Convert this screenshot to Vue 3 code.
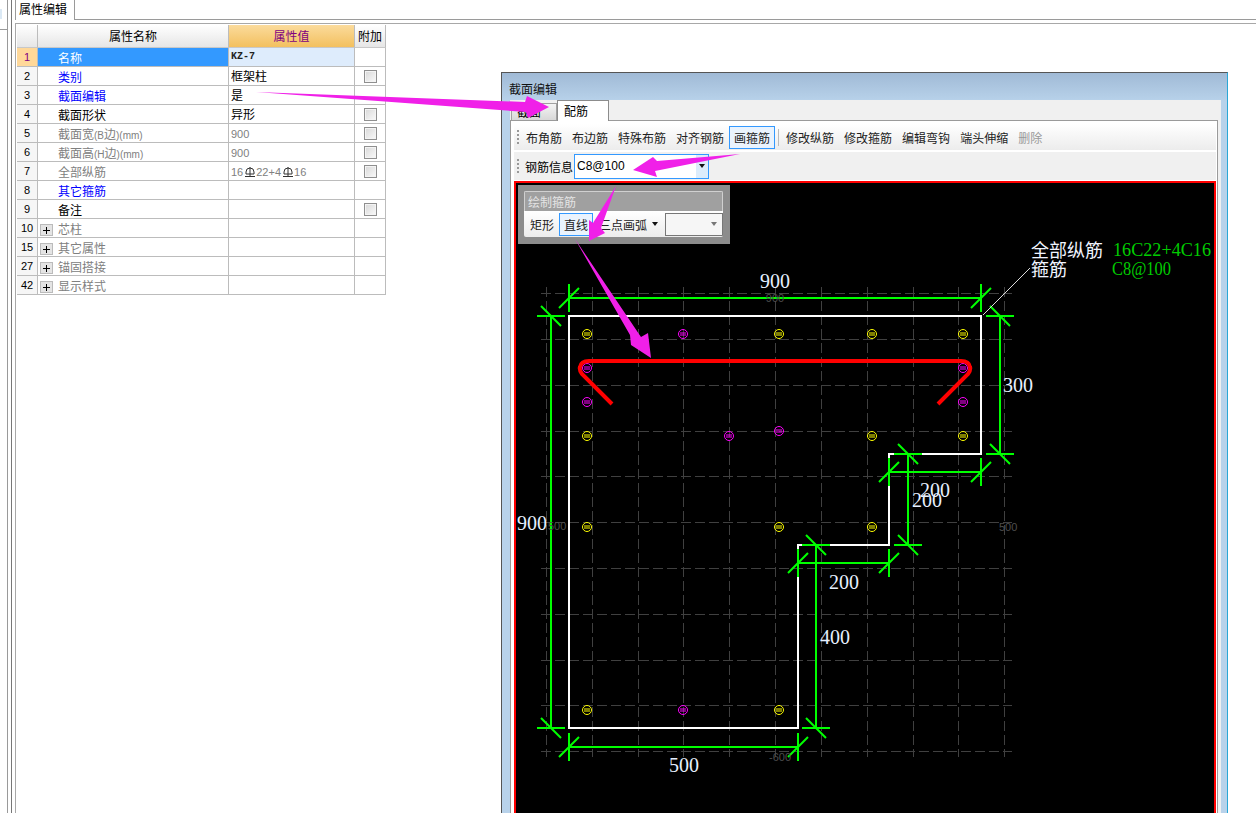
<template>
  <div class="page">
    <div class="rail"></div>

    <div class="main">
      <div class="tab-strip">
        <div class="doc-tab">属性编辑</div>
      </div>
      <div class="prop-panel">
        <table class="prop-table">
          <thead>
            <tr>
              <th class="corner"></th>
              <th class="head-name">属性名称</th>
              <th class="head-value">属性值</th>
              <th class="head-extra">附加</th>
            </tr>
          </thead>
          <tbody>
            <tr v-for="row in rows" :key="row.no" :class="{ selected: row.no === 1 }">
              <td class="row-no">{{ row.no }}</td>
              <td class="name-cell" :class="[row.tone, { tree: row.tree }]">
                <div class="cell-line">
                  <span v-if="row.tree" class="expander"></span>
                  <template v-for="(part, i) in splitLabel(row.name)" :key="i">
                    <span :class="{ latin: part.latin }">{{ part.text }}</span>
                  </template>
                </div>
              </td>
              <td class="value-cell" :class="{ muted: row.tone === 'gray', code: row.no === 1 }">
                <div class="cell-line value-line">
                  <template v-for="(part, i) in row.value.split('Φ')" :key="i">
                    <svg v-if="i > 0" class="grade" viewBox="0 0 10 10" width="10" height="10">
                      <path d="M1 7V5a4 4 0 0 1 8 0v2M1 7h8M5 0v9M0 9.500h10" fill="none" stroke="#333" stroke-width="1" />
                    </svg>
                    <span :class="{ digits: /^[0-9]/.test(part) }">{{ part }}</span>
                  </template>
                </div>
              </td>
              <td class="extra-cell"><span v-if="row.check" class="check"></span></td>
            </tr>
          </tbody>
        </table>
      </div>
    </div>

    <section class="dialog">
      <div class="dialog-title">截面编辑</div>
      <div class="dialog-body">
        <div class="tabs">
          <div class="tab-off">截面</div>
          <div class="tab-on">配筋</div>
        </div>
        <div class="tab-panel">
          <div class="toolbar">
            <span class="grip"></span>
            <template v-for="tool in tools" :key="tool">
              <span class="tool" :class="{ active: tool === '画箍筋', disabled: tool === '删除' }">{{ tool }}</span>
              <span v-if="tool === '画箍筋'" class="tool-sep"></span>
            </template>
          </div>
          <div class="toolbar second">
            <span class="grip"></span>
            <span class="info-label">钢筋信息</span>
            <div class="combo-blue">
              <span>C8@100</span>
              <span class="combo-drop"><i class="caret"></i></span>
            </div>
          </div>

          <div class="canvas">
            <svg class="drawing" viewBox="516 183 697 630" width="697" height="630">
              <path :d="gridPath" class="grid" />
              <polygon class="outline" points="569,316 981,316 981,454 889,454 889,545 798,545 798,728 569,728" />
              <g v-for="bar in bars" :key="bar.x + '-' + bar.y" :stroke="bar.c" fill="none" stroke-width="1">
                <circle :cx="bar.x" :cy="bar.y" r="4.500" />
                <path :d="`M${bar.x - 3} ${bar.y - 1}h6M${bar.x - 3} ${bar.y + 1}h6`" />
              </g>
              <path class="stirrup" d="M612 404L582 374Q579 370 580 367Q581 361 589 361H961Q969 361 970 367Q971 370 968 374L938 404" />
              <path class="dims" :d="dimPath" />
              <line x1="983" y1="315" x2="1030" y2="268" class="leader" />

              <text x="775" y="288" class="dim-text" text-anchor="middle">900</text>
              <text x="1003" y="392" class="dim-text">300</text>
              <text x="517" y="530" class="dim-text">900</text>
              <text x="920" y="497" class="dim-text">200</text>
              <text x="912" y="507" class="dim-text">200</text>
              <text x="829" y="589" class="dim-text">200</text>
              <text x="820" y="644" class="dim-text">400</text>
              <text x="669" y="772" class="dim-text">500</text>

              <text x="775" y="302" class="axis-text" text-anchor="middle">900</text>
              <text x="548" y="530" class="axis-text">500</text>
              <text x="999" y="531" class="axis-text">500</text>
              <text x="769" y="761" class="axis-text">-600</text>

              <text x="1031" y="257" class="note-text">全部纵筋</text>
              <text x="1031" y="276" class="note-text">箍筋</text>
              <text x="1113" y="256" class="rebar-text" textLength="98" lengthAdjust="spacingAndGlyphs">16C22+4C16</text>
              <text x="1112" y="275" class="rebar-text" textLength="59" lengthAdjust="spacingAndGlyphs">C8@100</text>
            </svg>

            <div class="float-panel">
              <div class="float-inner">
                <div class="float-title">绘制箍筋</div>
                <div class="float-bar">
                  <span class="tool">矩形</span>
                  <span class="tool active">直线</span>
                  <span class="arc">三点画弧</span>
                  <i class="caret"></i>
                  <span class="mini-combo"><i class="caret gray"></i></span>
                </div>
              </div>
            </div>
          </div>
        </div>
      </div>
    </section>

    <svg class="arrows" viewBox="0 0 1256 813" width="1256" height="813">
      <polygon points="256,92 525,102 527,96 549,107 528,118 526,112" />
      <polygon points="740,154 657,161 653,157 633,170 657,177 655,171" />
      <polygon points="616,186 601,228 605,233 589,241 589,220 593,223" />
      <polygon points="575,239 641,337 648,333 651,358 631,345 630,335" />
    </svg>
  </div>
</template>

<script setup>
const rows = [
  { no: 1, name: '名称', value: 'KZ-7', tone: 'white' },
  { no: 2, name: '类别', value: '框架柱', tone: 'blue', check: true },
  { no: 3, name: '截面编辑', value: '是', tone: 'blue' },
  { no: 4, name: '截面形状', value: '异形', tone: 'black', check: true },
  { no: 5, name: '截面宽(B边)(mm)', value: '900', tone: 'gray', check: true },
  { no: 6, name: '截面高(H边)(mm)', value: '900', tone: 'gray', check: true },
  { no: 7, name: '全部纵筋', value: '16Φ22+4Φ16', tone: 'gray', check: true },
  { no: 8, name: '其它箍筋', value: '', tone: 'blue' },
  { no: 9, name: '备注', value: '', tone: 'black', check: true },
  { no: 10, name: '芯柱', value: '', tone: 'gray', tree: true },
  { no: 15, name: '其它属性', value: '', tone: 'gray', tree: true },
  { no: 27, name: '锚固搭接', value: '', tone: 'gray', tree: true },
  { no: 42, name: '显示样式', value: '', tone: 'gray', tree: true }
]

const tools = ['布角筋', '布边筋', '特殊布筋', '对齐钢筋', '画箍筋', '修改纵筋', '修改箍筋', '编辑弯钩', '端头伸缩', '删除']

// ascii bits in the labels are narrower than the chinese ones
function splitLabel(name) {
  return name.split(/([()A-Za-z]+)/).filter(Boolean).map(text => ({ text, latin: /^[()A-Za-z]/.test(text) }))
}

const Y = '#ffff00'
const M = '#ff00ff'
const bars = [
  { x: 587, y: 334, c: Y }, { x: 683, y: 334, c: M }, { x: 779, y: 334, c: Y }, { x: 872, y: 334, c: Y }, { x: 963, y: 334, c: Y },
  { x: 587, y: 368, c: M }, { x: 963, y: 368, c: M }, { x: 587, y: 402, c: M }, { x: 963, y: 402, c: M },
  { x: 587, y: 436, c: Y }, { x: 729, y: 436, c: M }, { x: 779, y: 431, c: M }, { x: 872, y: 436, c: Y }, { x: 963, y: 436, c: Y },
  { x: 587, y: 527, c: Y }, { x: 779, y: 527, c: Y }, { x: 872, y: 527, c: Y },
  { x: 587, y: 710, c: Y }, { x: 683, y: 710, c: M }, { x: 779, y: 710, c: Y }
]

const gridX = [546, 592, 638, 683, 729, 775, 821, 867, 913, 958, 1004]
const gridY = [293, 339, 385, 431, 476, 522, 568, 614, 660, 705, 751]
const gridPath = gridX.map(x => `M${x}.5 287V757`).concat(gridY.map(y => `M541 ${y}.5H1012`)).join('')

// dimension line with a vertical or horizontal stop and a slash at each end
function hDim(y, x1, x2) {
  const stop = x => `M${x} ${y - 14}V${y + 14}M${x - 10} ${y + 10}L${x + 10} ${y - 10}`
  return `M${x1} ${y}H${x2}` + stop(x1) + stop(x2)
}
function vDim(x, y1, y2) {
  const stop = y => `M${x - 14} ${y}H${x + 14}M${x - 10} ${y - 10}L${x + 10} ${y + 10}`
  return `M${x} ${y1}V${y2}` + stop(y1) + stop(y2)
}
const dimPath = [
  hDim(298, 569, 981), hDim(472, 889, 981), hDim(563, 798, 889), hDim(747, 569, 798),
  vDim(551, 316, 728), vDim(1000, 316, 454), vDim(908, 454, 545), vDim(816, 545, 728)
].join('')
</script>

<style scoped>
.page {
  position: relative;
  display: flex;
  width: 1256px;
  height: 813px;
  overflow: hidden;
  background: #fff;
  font-family: "Noto Sans CJK SC", "Liberation Sans", sans-serif;
  font-size: 12px;
  color: #000;
}

.rail {
  flex: none;
  width: 15px;
  background:
    linear-gradient(#9a9a9a, #9a9a9a) 7px 0 / 1px 100% no-repeat,
    linear-gradient(#777, #777) 11px 0 / 1px 100% no-repeat,
    linear-gradient(#9a9a9a, #9a9a9a) 0 29px / 7px 1px no-repeat,
    linear-gradient(#dbe9f5, #dbe9f5) 0 9px / 2px 10px no-repeat;
}

.main {
  flex: 1;
  min-width: 0;
}

.tab-strip {
  height: 20px;
  box-sizing: border-box;
  border-bottom: 1px solid #9a9a9a;
}

.doc-tab {
  width: 60px;
  height: 20px;
  box-sizing: border-box;
  border-left: 1px solid #9a9a9a;
  border-right: 1px solid #9a9a9a;
  background: #fff;
  padding-left: 3px;
  line-height: 18px;
}

.prop-panel {
  height: 790px;
  box-sizing: border-box;
  border-left: 1px solid #a8a8a8;
  margin-top: 3px;
  border-top: 1px solid #a8a8a8;
  padding: 1px 0 0 1px;
}

.prop-table {
  table-layout: fixed;
  width: 369px;
  border-collapse: separate;
  border-spacing: 0;
}

.prop-table th,
.prop-table td {
  box-sizing: border-box;
  height: 19px;
  padding: 0;
  border-right: 1px solid #bcbcbc;
  border-bottom: 1px solid #bcbcbc;
  font-weight: normal;
  line-height: 18px;
  white-space: nowrap;
  overflow: hidden;
  vertical-align: top;
}

.prop-table th {
  height: 23px;
  line-height: 22px;
  border-bottom-color: #c8c8c8;
  background: linear-gradient(#fff, #e6e6e6);
}

.corner {
  width: 21px;
}

.head-name {
  width: 191px;
}

.head-value {
  width: 126px;
  color: #800080;
}

.prop-table th.head-value {
  background: linear-gradient(#fbdb9c, #f3c05f);
}

.head-extra {
  width: 31px;
}

.row-no {
  text-align: center;
  background: #f6f6f6;
  font-family: "Liberation Sans", sans-serif;
  font-size: 11px;
}

.selected .row-no {
  background: #ffd899;
  color: #800080;
}

.cell-line {
  height: 18px;
  line-height: 20px;
  overflow: hidden;
}

.value-line {
  line-height: 18px;
}

.name-cell {
  padding-left: 20px !important;
}

.name-cell.tree {
  padding-left: 2px !important;
}

.white {
  background: #3399ff;
  color: #fff;
}

.blue {
  color: #0000ff;
}

.black {
  color: #000;
}

.gray {
  color: #808080;
}

.latin {
  font-family: "Liberation Sans", sans-serif;
  font-size: 10px;
}

.expander {
  display: inline-block;
  width: 13px;
  height: 12px;
  margin-right: 5px;
  vertical-align: -2px;
  box-sizing: border-box;
  border: 1px solid #bbb;
  background: linear-gradient(#000, #000) center / 7px 1px no-repeat,
    linear-gradient(#000, #000) center / 1px 7px no-repeat,
    #e4e4e4;
}

.value-cell {
  padding-left: 2px !important;
}

.selected .value-cell {
  background: #deecfc;
}

.value-cell.muted {
  color: #808080;
}

.value-cell.code {
  font-family: "Liberation Mono", monospace;
  font-size: 10px;
  font-weight: bold;
  color: #222;
}

.digits {
  font-family: "Liberation Sans", sans-serif;
  font-size: 11px;
}

.grade {
  margin: 0 1px 0 2px;
  vertical-align: -1px;
}

.extra-cell {
  text-align: center;
}

.check {
  display: block;
  width: 13px;
  height: 13px;
  margin: 3px 0 0 9px;
  box-sizing: border-box;
  border: 1px solid #8f8f8f;
  background: linear-gradient(135deg, #d8d8d8, #fafafa);
  box-shadow: inset 0 0 0 1px #f4f4f4;
}

.dialog {
  position: absolute;
  left: 501px;
  top: 72px;
  width: 727px;
  height: 760px;
  box-sizing: border-box;
  display: flex;
  flex-direction: column;
  padding: 0 6px 0 8px;
  border: 1px solid #555;
  border-right-color: #2aa7d6;
  background: linear-gradient(#a0bad6, #b8d2ea 28px);
}

.dialog-title {
  flex: none;
  height: 27px;
  margin-left: -1px;
  line-height: 32px;
  color: #111;
}

.dialog-body {
  flex: 1;
  display: flex;
  flex-direction: column;
  background: #f0f0f0;
  padding-right: 3px;
}

.tabs {
  flex: none;
  display: flex;
  align-items: flex-end;
  height: 20px;
  padding-left: 1px;
}

.tab-off {
  width: 46px;
  height: 17px;
  box-sizing: border-box;
  padding-left: 5px;
  border: 1px solid #a0a0a0;
  border-bottom: 0;
  background: linear-gradient(#f4f4f4, #d8d8d8);
  line-height: 16px;
}

.tab-on {
  width: 52px;
  height: 21px;
  margin-bottom: -1px;
  box-sizing: border-box;
  padding-left: 6px;
  border: 1px solid #8c8c8c;
  border-bottom: 0;
  background: #fff;
  line-height: 19px;
  position: relative;
  z-index: 1;
}

.tab-panel {
  flex: 1;
  display: flex;
  flex-direction: column;
  box-sizing: border-box;
  border: 1px solid #9a9a9a;
  background: #fff;
  padding: 3px 1px 0 3px;
}

.toolbar {
  flex: none;
  display: flex;
  align-items: center;
  height: 26px;
  padding-left: 3px;
  background: linear-gradient(#fff, #ececec);
}

.toolbar.second {
  height: 28px;
  margin-top: 2px;
  margin-bottom: 1px;
  background: #f0f0f0;
}

.grip {
  width: 2px;
  height: 15px;
  margin-right: 2px;
  background: repeating-linear-gradient(#999 0 2px, transparent 2px 4px);
}

.tool {
  box-sizing: border-box;
  height: 23px;
  padding: 0 4px;
  line-height: 21px;
  border: 1px solid transparent;
  white-space: nowrap;
  color: #222;
}

.tool.active {
  border-color: #3399ff;
  background: #eaf3fd;
}

.tool.disabled {
  color: #999;
}

.tool-sep {
  width: 1px;
  height: 17px;
  margin: 0 2px 0 3px;
  background: #bbb;
}

.info-label {
  margin-left: 4px;
  margin-right: 1px;
}

.combo-blue {
  display: flex;
  align-items: center;
  justify-content: space-between;
  width: 135px;
  height: 25px;
  box-sizing: border-box;
  border: 1px solid #3399ff;
  background: #fff;
  padding-left: 2px;
  font-family: "Liberation Sans", sans-serif;
  font-size: 12px;
}

.combo-drop {
  display: flex;
  align-items: center;
  justify-content: center;
  width: 12px;
  height: 100%;
  background: #dcecfb;
}

.caret {
  display: inline-block;
  flex: none;
  width: 0;
  height: 0;
  border-left: 3px solid transparent;
  border-right: 3px solid transparent;
  border-top: 4px solid #111;
}

.caret.gray {
  border-top-color: #777;
}

.canvas {
  position: relative;
  flex: 1;
  min-height: 0;
  border: 2px solid #ff0000;
  border-bottom: 0;
  background: #000;
  overflow: hidden;
}

.drawing {
  display: block;
}

.grid {
  fill: none;
  stroke: #404040;
  stroke-width: 1;
  stroke-dasharray: 10 4;
}

.outline {
  fill: none;
  stroke: #fff;
  stroke-width: 2;
}

.stirrup {
  fill: none;
  stroke: #ff0000;
  stroke-width: 4;
}

.dims {
  fill: none;
  stroke: #00ff00;
  stroke-width: 2;
}

.leader {
  stroke: #ddd;
  stroke-width: 1;
}

.dim-text {
  font-family: "Liberation Serif", serif;
  font-size: 20px;
  fill: #e6f0ff;
}

.axis-text {
  font-family: "Liberation Sans", sans-serif;
  font-size: 11px;
  fill: #4d4d4d;
}

.note-text {
  font-size: 18px;
  fill: #f0f4ff;
}

.rebar-text {
  font-family: "Liberation Serif", serif;
  font-size: 19px;
  fill: #00cc00;
}

.float-panel {
  position: absolute;
  left: 2px;
  top: 2px;
  width: 212px;
  height: 59px;
  box-sizing: border-box;
  padding: 6px 7px 7px 6px;
  background: #8c8c8c;
}

.float-inner {
  height: 46px;
  border-radius: 2px;
  overflow: hidden;
}

.float-title {
  height: 20px;
  box-sizing: border-box;
  padding-left: 3px;
  border: 1px solid #d0d0d0;
  border-bottom: 0;
  background: #a0a0a0;
  color: #e4e4e4;
  line-height: 19px;
}

.float-bar {
  display: flex;
  align-items: center;
  height: 26px;
  padding-left: 1px;
  background: linear-gradient(#fff, #ececec);
}

.arc {
  flex: none;
  margin-left: 6px;
  margin-right: 5px;
  white-space: nowrap;
  color: #222;
}

.mini-combo {
  display: flex;
  flex: none;
  align-items: center;
  justify-content: flex-end;
  width: 58px;
  height: 23px;
  margin-left: 7px;
  padding-right: 5px;
  box-sizing: border-box;
  border: 1px solid #777;
  background: #f6f6f6;
}

.arrows {
  position: absolute;
  left: 0;
  top: 0;
  pointer-events: none;
  fill: #f020e8;
}
</style>

<style>
html,
body {
  margin: 0;
  background: #fff;
}
</style>
